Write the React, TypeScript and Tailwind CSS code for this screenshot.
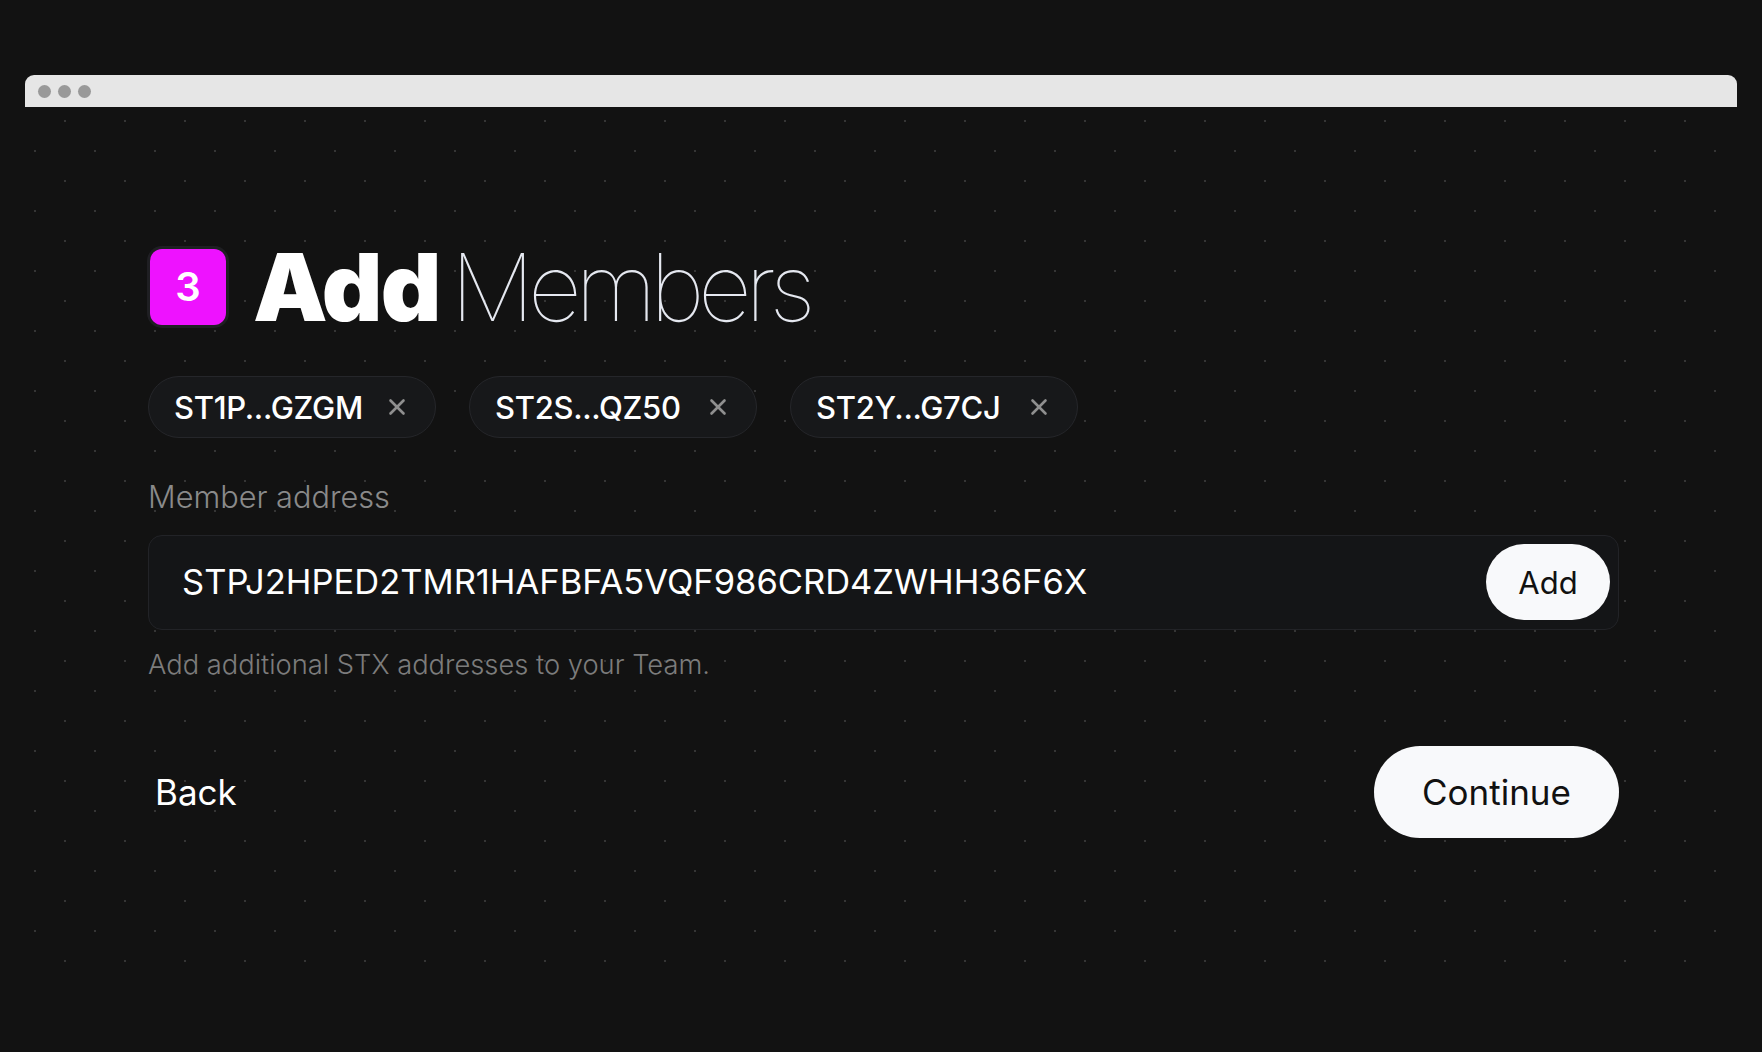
import { X } from 'lucide-react';

const members = ['ST1P...GZGM', 'ST2S...QZ50', 'ST2Y...G7CJ'];

function MemberChip({ label }: { label: string }) {
  return (
    <div className="flex h-[62px] w-[288px] items-center justify-between rounded-full border border-[#25262a] bg-[#17181a] pl-[25px] pr-[25px]">
      <span className="text-[31px] font-medium leading-none tracking-[-0.01em] text-white">{label}</span>
      <X className="size-[26px] text-[#8f8f8f]" strokeWidth={2.4} />
    </div>
  );
}

export default function App() {
  return (
    <div className="min-h-screen bg-[#121212] px-[25px] pt-[75px] font-['Inter',sans-serif]">
      <div className="overflow-hidden rounded-t-[9px]">
        {/* window bar */}
        <div className="flex h-8 items-center gap-[7px] bg-[#e6e6e6] pl-[13px]">
          <span className="size-[13px] rounded-full bg-[#999999]" />
          <span className="size-[13px] rounded-full bg-[#999999]" />
          <span className="size-[13px] rounded-full bg-[#999999]" />
        </div>

        <div className="h-[866px] bg-[#121212] pl-[123px] pr-[118px] pt-[133px] [background-image:radial-gradient(circle,#353535_1px,transparent_1.4px),radial-gradient(circle,#353535_1px,transparent_1.4px)] [background-position:10px_-16px,-20px_14px] [background-size:60px_60px]">
          <div className="flex items-center gap-[27px]">
            <div className="ml-[2px] flex size-[76px] items-center justify-center rounded-[12px] bg-[#ee12ff] ring-[3px] ring-[#1f1f23]">
              <span className="text-[40px] font-semibold leading-none text-white">3</span>
            </div>
            <h1 className="flex gap-[11px] text-[94px] leading-none">
              <span className="font-black tracking-[-0.02em] text-white">Add</span>
              <span className="font-thin tracking-[-0.07em] text-[#e5e8f0]">Members</span>
            </h1>
          </div>

          <div className="mt-[42px] flex gap-[33px]">
            {members.map((m) => (
              <MemberChip key={m} label={m} />
            ))}
          </div>

          <label className="mt-[44px] block text-[30.7px] font-light leading-none text-[#8a8a8a]">
            Member address
          </label>

          <div className="mt-[22px] flex h-[95px] items-center justify-between rounded-[14px] border border-[#222327] bg-[#141517] pl-[33px] pr-[8px]">
            <span className="text-[34.5px] leading-none text-white">
              STPJ2HPED2TMR1HAFBFA5VQF986CRD4ZWHH36F6X
            </span>
            <button className="flex h-[76px] w-[124px] items-center justify-center rounded-full bg-[#f8f9fb] text-[31px] font-normal leading-none text-[#111111]">
              Add
            </button>
          </div>

          <p className="mt-[21px] text-[27.3px] font-light leading-none text-[#7c7c7c]">
            Add additional STX addresses to your Team.
          </p>

          <div className="mt-[68px] flex items-center justify-between">
            <button className="px-[7px] text-[35px] leading-none text-white">Back</button>
            <button className="flex h-[92px] w-[245px] items-center justify-center rounded-full bg-[#f8f9fb] text-[35px] leading-none text-[#111111]">
              Continue
            </button>
          </div>
        </div>
      </div>
    </div>
  );
}
